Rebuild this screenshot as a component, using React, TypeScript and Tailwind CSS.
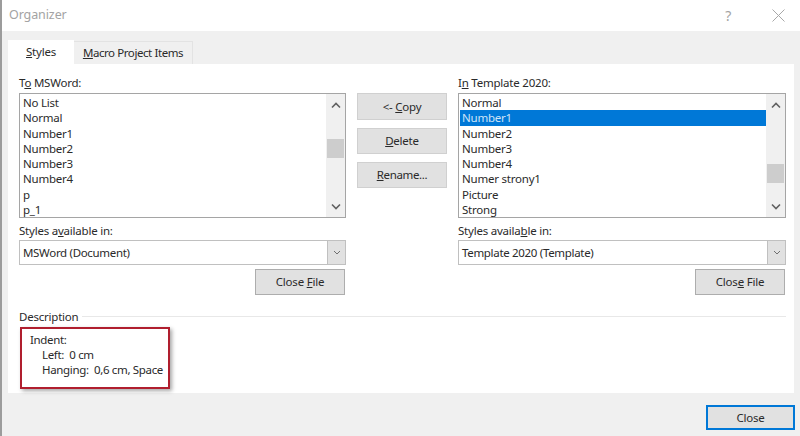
import React from 'react';

const leftItems = ['No List', 'Normal', 'Number1', 'Number2', 'Number3', 'Number4', 'p', 'p_1'];
const rightItems = ['Normal', 'Number1', 'Number2', 'Number3', 'Number4', 'Numer strony1', 'Picture', 'Strong'];

const Chevron: React.FC<{ up?: boolean; className?: string }> = ({ up, className }) => (
  <svg width="10" height="7" viewBox="0 0 10 7" className={className} fill="none" stroke="#606060" strokeWidth="1.6">
    <path d={up ? 'M1 5.5L5 1.5L9 5.5' : 'M1 1.5L5 5.5L9 1.5'} />
  </svg>
);

const Btn: React.FC<{ className?: string; children: React.ReactNode }> = ({ className = 'border border-[#adadad]', children }) => (
  <div className={`flex items-center justify-center bg-[#e1e1e1] ${className}`}>
    {children}
  </div>
);

const ListBox: React.FC<{ items: string[]; selected?: string; thumbTop: string }> = ({ items, selected, thumbTop }) => (
  <div className="flex h-[125px] border border-[#a5a5a5] bg-white">
    <div className="flex-1 pl-[1px] pt-[1px]">
      {items.map((item) => (
        <div
          key={item}
          className={`h-[15.3px] pl-[2px] leading-[15px] ${item === selected ? 'bg-[#0078d7] text-[#cfe4f7]' : ''}`}
        >
          {item}
        </div>
      ))}
    </div>
    <div className="flex w-[19px] flex-col items-center bg-[#f0f0f0] pt-[8px] pb-[7px]">
      <Chevron up />
      <div className={`w-[17px] h-[19px] bg-[#cdcdcd] ${thumbTop}`} />
      <Chevron className="mt-auto" />
    </div>
  </div>
);

const Combo: React.FC<{ value: string }> = ({ value }) => (
  <div className="flex h-[25px] items-center border border-[#c0c0c0] bg-white pl-[3px]">
    <span className="flex-1 tracking-[-0.32px]">{value}</span>
    <div className="flex h-[23px] w-[18px] items-center justify-center bg-[#e1e1e1] border-l border-[#c0c0c0]">
      <svg width="8" height="5" viewBox="0 0 8 5" fill="none" stroke="#707070" strokeWidth="1">
        <path d="M1 1L4 4L7 1" />
      </svg>
    </div>
  </div>
);

export default function App() {
  return (
    <div className="flex h-[436px] w-[800px] flex-col overflow-hidden bg-[#f0f0f0] border-l-[2px] border-[#9c9c9c] font-['Noto_Sans',sans-serif] text-[11.5px] tracking-[-0.22px] text-[#2a2a2a]">
      {/* title bar */}
      <div className="flex h-[31px] items-center bg-white pl-[7px] pr-[15px]">
        <span className="flex-1 text-[12.5px] tracking-[-0.1px] text-[#a3a3a3]">Organizer</span>
        <span className="mr-[41px] text-[14px] text-[#a3a3a3]">?</span>
        <svg width="13" height="13" viewBox="0 0 13 13" stroke="#a8a8a8" strokeWidth="1">
          <path d="M0.5 0.5L12.5 12.5M12.5 0.5L0.5 12.5" />
        </svg>
      </div>

      {/* tabs */}
      <div className="ml-[6px] mt-[9px] flex h-[24px] items-end">
        <div className="flex h-[24px] w-[66px] items-center justify-center bg-white">
          <span><u>S</u>tyles</span>
        </div>
        <div className="flex h-[23px] w-[119px] items-center justify-center border-r border-t border-[#e3e3e3] bg-[#f0f0f0]">
          <span className="tracking-[-0.42px]"><u>M</u>acro Project Items</span>
        </div>
      </div>

      {/* tab panel */}
      <div className="ml-[6px] w-[786px] h-[329px] bg-white pl-[11px] pr-[8px] pt-[10px]">
        <div className="flex gap-[11px]">
          <div className="w-[327px]">
            <div className="h-[19px] leading-[18px]">T<u>o</u> MSWord:</div>
            <ListBox items={leftItems} thumbTop="mt-[30px]" />
            <div className="mt-[4px] h-[18px] leading-[18px]">Styles a<u>v</u>ailable in:</div>
            <Combo value="MSWord (Document)" />
            <div className="mt-[4px] flex justify-end pr-[1px]">
              <Btn className="h-[26px] w-[90px] border border-[#adadad]"><span>Close <u>F</u>ile</span></Btn>
            </div>
          </div>

          <div className="flex w-[90px] flex-col gap-[8px] pt-[19px]">
            <Btn className="h-[27px] border border-[#d0d0d0]"><span>&lt;- <u>C</u>opy</span></Btn>
            <Btn className="h-[26px] border border-[#d0d0d0]"><span><u>D</u>elete</span></Btn>
            <Btn className="h-[26px] border border-[#d0d0d0]"><span className="tracking-[-0.35px]"><u>R</u>ename...</span></Btn>
          </div>

          <div className="w-[328px]">
            <div className="h-[19px] leading-[18px]">I<u>n</u> Template 2020:</div>
            <ListBox items={rightItems} selected="Number1" thumbTop="mt-[55px]" />
            <div className="mt-[4px] h-[18px] leading-[18px]">Styles availa<u>b</u>le in:</div>
            <Combo value="Template 2020 (Template)" />
            <div className="mt-[4px] flex justify-end pr-[1px]">
              <Btn className="h-[26px] w-[90px] border border-[#adadad]"><span>Clos<u>e</u> File</span></Btn>
            </div>
          </div>
        </div>

        {/* description */}
        <div className="mt-[12px] flex items-start gap-[4px]">
          <span className="leading-[20px]">Description</span>
          <div className="mt-[9px] h-[1px] flex-1 bg-[#e8e8e8]" />
        </div>
        <div className="ml-[1px] h-[62px] w-[150px] border-2 border-[#b01e2e] pl-[8px] pt-[3px] leading-[15px] tracking-[-0.34px] shadow-[2px_2px_4px_rgba(0,0,0,0.35)]">
          <div>Indent:</div>
          <div className="pl-[12px]">Left:&nbsp; 0 cm</div>
          <div className="pl-[12px]">Hanging:&nbsp; 0,6 cm, Space</div>
        </div>
      </div>

      {/* footer */}
      <div className="mr-[5px] mt-[12px] flex justify-end">
        <Btn className="h-[25px] w-[89px] border-2 border-[#0078d7]">Close</Btn>
      </div>
    </div>
  );
}
